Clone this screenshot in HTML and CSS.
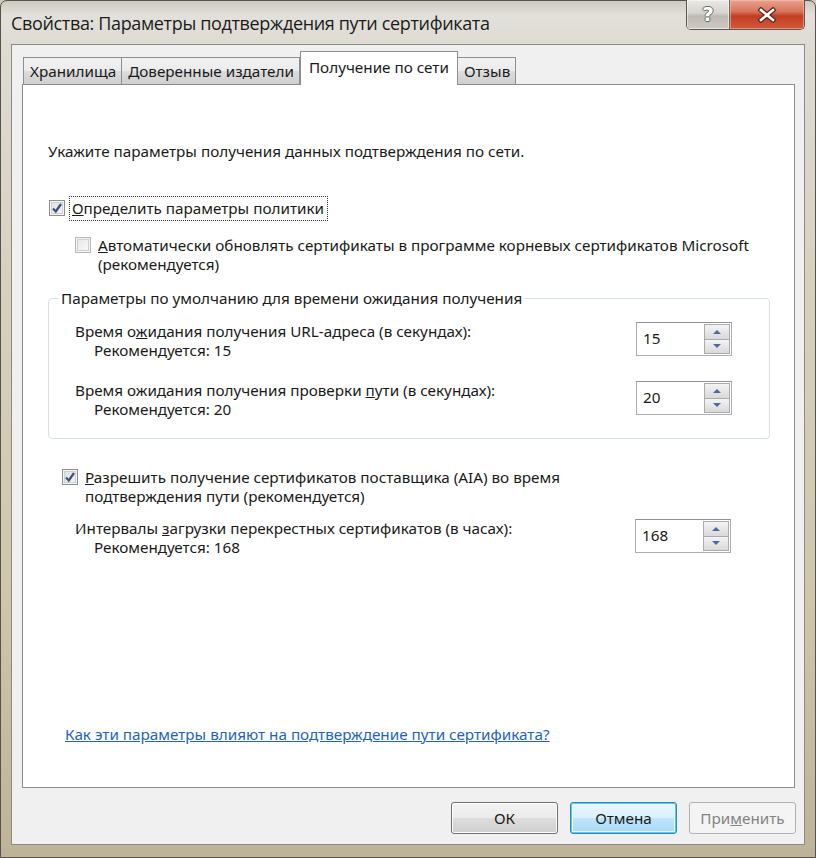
FILE: index.html
```html
<!DOCTYPE html>
<html lang="ru">
<head>
    <meta charset="utf-8">
    <title>Свойства: Параметры подтверждения пути сертификата</title>
    <link rel="stylesheet" href="styles.css">
</head>
<body>
<div class="window">
    <div class="titlebar">
        <div class="title">Свойства: Параметры подтверждения пути сертификата</div>
        <div class="caption-buttons">
            <div class="cap-btn help"><span>?</span></div>
            <div class="cap-btn close">
                <svg width="20" height="16" viewBox="0 0 20 16">
                    <path d="M4 3 L16 13 M16 3 L4 13" stroke="#5a2a20" stroke-width="5" stroke-linecap="square"/>
                    <path d="M4 3 L16 13 M16 3 L4 13" stroke="#fff" stroke-width="2.6" stroke-linecap="square"/>
                </svg>
            </div>
        </div>
    </div>

    <div class="client">
        <div class="tabs">
            <div class="tab">Хранилища</div>
            <div class="tab">Доверенные издатели</div>
            <div class="tab active">Получение по сети</div>
            <div class="tab">Отзыв</div>
        </div>

        <div class="panel">
            <p class="intro">Укажите параметры получения данных подтверждения по сети.</p>

            <div class="check-row policy">
                <span class="checkbox checked">
                    <svg width="12" height="12" viewBox="0 0 12 12"><path d="M2 6.5 L4.8 9.5 L10 2" fill="none" stroke="#3a4f86" stroke-width="2.2"/></svg>
                </span>
                <span class="check-label focused"><u>О</u>пределить параметры политики</span>
            </div>

            <div class="check-row auto-update">
                <span class="checkbox disabled"></span>
                <span class="check-label"><u>А</u>втоматически обновлять сертификаты в программе корневых сертификатов Microsoft<br>(рекомендуется)</span>
            </div>

            <fieldset class="group">
                <legend>Параметры по умолчанию для времени ожидания получения</legend>
                <div class="field-row">
                    <div class="field-text">
                        Время о<u>ж</u>идания получения URL-адреса (в секундах):
                        <div class="hint">Рекомендуется: 15</div>
                    </div>
                    <div class="spinner">
                        <div class="spin-value">15</div>
                        <div class="spin-btns">
                            <div class="spin-btn up"></div>
                            <div class="spin-btn down"></div>
                        </div>
                    </div>
                </div>
                <div class="field-row">
                    <div class="field-text">
                        Время ожидания получения проверки <u>п</u>ути (в секундах):
                        <div class="hint">Рекомендуется: 20</div>
                    </div>
                    <div class="spinner">
                        <div class="spin-value">20</div>
                        <div class="spin-btns">
                            <div class="spin-btn up"></div>
                            <div class="spin-btn down"></div>
                        </div>
                    </div>
                </div>
            </fieldset>

            <div class="check-row aia">
                <span class="checkbox checked">
                    <svg width="12" height="12" viewBox="0 0 12 12"><path d="M2 6.5 L4.8 9.5 L10 2" fill="none" stroke="#3a4f86" stroke-width="2.2"/></svg>
                </span>
                <span class="check-label"><u>Р</u>азрешить получение сертификатов поставщика (AIA) во время<br>подтверждения пути (рекомендуется)</span>
            </div>

            <div class="field-row cross">
                <div class="field-text">
                    Интервалы <u>з</u>агрузки перекрестных сертификатов (в часах):
                    <div class="hint">Рекомендуется: 168</div>
                </div>
                <div class="spinner">
                    <div class="spin-value">168</div>
                    <div class="spin-btns">
                        <div class="spin-btn up"></div>
                        <div class="spin-btn down"></div>
                    </div>
                </div>
            </div>

            <a class="help-link" href="#">Как эти параметры влияют на подтверждение пути сертификата?</a>
        </div>

        <div class="buttons">
            <button class="btn">ОК</button>
            <button class="btn default">Отмена</button>
            <button class="btn" disabled>При<u>м</u>енить</button>
        </div>
    </div>
</div>
</body>
</html>
```

FILE: styles.css
```css
* {
    box-sizing: border-box;
}
body {
    margin: 0;
    width: 816px;
    height: 858px;
    background: #cfc9b8;
    font-family: "Noto Sans", "Open Sans", sans-serif;
    font-size: 15.25px;
    line-height: 19px;
    color: #1a1a1a;
}
.window {
    width: 816px;
    height: 858px;
    padding: 0 10px 12px 10px;
    border: 1px solid #55534c;
    border-radius: 7px 7px 0 0;
    background: linear-gradient(180deg, #cdcac2 0, #e2e0da 14px, #dedbd3 45px, #d6d0bd 300px, #cfc6aa 600px, #bdb398 858px);
    display: flex;
    flex-direction: column;
}
.titlebar {
    height: 44px;
    display: flex;
    align-items: flex-start;
}
.title {
    padding-top: 10px;
    font-family: "Open Sans", sans-serif;
    font-size: 18px;
    line-height: 24px;
    letter-spacing: -0.35px;
    color: #1b1b1b;
}
.caption-buttons {
    margin-left: auto;
    margin-top: -1px;
    display: flex;
    height: 30px;
    border: 1px solid #5b5650;
    border-top: none;
    border-radius: 0 0 5px 5px;
    overflow: hidden;
}
.cap-btn {
    display: flex;
    align-items: center;
    justify-content: center;
    height: 100%;
}
.help {
    width: 43px;
    border-right: 1px solid #6c665e;
    background: linear-gradient(180deg, #e9e8e4 0, #d6d4cf 45%, #bebab2 55%, #cfcbc3 100%);
    box-shadow: inset 0 0 0 1px rgba(255, 255, 255, 0.5);
}
.help span {
    font-family: "DejaVu Sans", sans-serif;
    font-weight: bold;
    font-size: 20px;
    color: #fff;
    text-shadow: 1px 0 #6a6a6a, -1px 0 #6a6a6a, 0 1px #6a6a6a, 0 -1px #6a6a6a;
}
.close {
    width: 74px;
    background: linear-gradient(180deg, #e8a290 0, #d9735b 40%, #c23d22 55%, #d35a3c 100%);
    box-shadow: inset 0 0 0 1px rgba(255, 200, 180, 0.5);
}

.client {
    height: 801px;
    border: 1px solid #8d8a82;
    background: #f0f0f0;
    padding: 6px 0 10px 10px;
    display: flex;
    flex-direction: column;
}
.tabs {
    display: flex;
    align-items: flex-end;
    height: 33px;
    padding-left: 1px;
    position: relative;
    z-index: 1;
}
.tab {
    height: 27px;
    padding: 4px 5px 0 6px;
    border: 1px solid #8c8e94;
    border-bottom: none;
    border-left: none;
    background: linear-gradient(180deg, #f2f2f2 0, #ebebeb 50%, #dddddd 51%, #cfcfcf 100%);
    white-space: nowrap;
}
.tab:first-child {
    border-left: 1px solid #8c8e94;
}
.tab.active {
    height: 34px;
    margin-bottom: -1px;
    padding: 6px 8px 0 8px;
    background: #fff;
    border-left: 1px solid #8c8e94;
}
.tab.active + .tab {
    border-left: none;
}

.panel {
    height: 705px;
    width: 773px;
    border: 1px solid #898c95;
    background: #fff;
    padding: 57px 0 0 25px;
    display: flex;
    flex-direction: column;
    align-items: flex-start;
}
.intro {
    margin: 0;
}
.check-row {
    display: flex;
    align-items: flex-start;
}
.checkbox {
    flex: none;
    width: 16px;
    height: 16px;
    margin-top: 1px;
    margin-right: 7px;
    border: 1px solid #8e8f8f;
    background: linear-gradient(135deg, #dcdcdc 0, #f7f7f7 100%);
    box-shadow: inset 0 0 0 1px #f4f4f4, inset 0 0 0 2px #d0d0d0;
    display: flex;
    align-items: center;
    justify-content: center;
}
.checkbox.disabled {
    border-color: #b6b6b6;
    background: linear-gradient(135deg, #e6e6e6 0, #fafafa 100%);
}
.check-label.focused {
    outline: 1px dotted #333;
    outline-offset: 2px;
    padding-right: 1px;
}
.policy {
    margin-top: 38px;
    margin-left: 1px;
}
.auto-update {
    margin-top: 18px;
    margin-left: 27px;
}
.group {
    align-self: stretch;
    margin: 15px 24px 0 0;
    padding: 14px 37px 19px 11px;
    border: 1px solid #d5dfe5;
    border-radius: 4px;
    min-width: 0;
}
.group legend {
    padding: 0 2px;
    margin-left: -1px;
}
.field-row {
    display: flex;
    align-items: flex-start;
    margin-left: 15px;
}
.field-row + .field-row {
    margin-top: 21px;
}
.hint {
    padding-left: 19px;
}
.spinner {
    margin-left: auto;
    width: 96px;
    height: 34px;
    border: 1px solid #abadb3;
    border-top-color: #8e9197;
    display: flex;
    background: #fff;
}
.spin-value {
    flex: 1;
    padding: 6px 0 0 6px;
}
.spin-btns {
    width: 27px;
    display: flex;
    flex-direction: column;
    padding: 1px 1px 1px 0;
}
.spin-btn {
    flex: 1;
    border: 1px solid #a9abb0;
    background: linear-gradient(180deg, #f4f4f4 0, #e6e6e6 50%, #d9d9d9 100%);
    display: flex;
    align-items: center;
    justify-content: center;
}
.spin-btn.down {
    border-top: none;
}
.spin-btn::after {
    content: "";
    border-left: 4px solid transparent;
    border-right: 4px solid transparent;
}
.spin-btn.up::after {
    border-bottom: 4px solid #4d6aa0;
}
.spin-btn.down::after {
    border-top: 4px solid #4d6aa0;
}
.aia {
    margin-top: 29px;
    margin-left: 14px;
}
.field-row.cross {
    align-self: stretch;
    margin: 13px 63px 0 27px;
}
.help-link {
    margin-top: auto;
    margin-bottom: 43px;
    margin-left: 17px;
    color: #1f63c4;
    text-decoration: underline;
}

.buttons {
    display: flex;
    justify-content: flex-end;
    gap: 12px;
    margin-top: 14px;
    padding-right: 8px;
}
.btn {
    width: 107px;
    height: 32px;
    font-family: "Noto Sans", "Open Sans", sans-serif;
    font-size: 15.25px;
    color: #1a1a1a;
    border: 1px solid #707070;
    border-radius: 3px;
    background: linear-gradient(180deg, #f2f2f2 0, #ebebeb 50%, #dddddd 51%, #cfcfcf 100%);
    box-shadow: inset 0 0 0 1px #fcfcfc;
    padding: 0;
}
.btn.default {
    border-color: #3c7fb1;
    background: linear-gradient(180deg, #eaf6fd 0, #d9f0fc 50%, #bee6fd 51%, #a7d9f5 100%);
    box-shadow: inset 0 0 0 1px #48d2f4, inset 0 0 0 2px #e6f7fd;
}
.btn:disabled {
    border-color: #adb2b5;
    background: #f4f4f4;
    box-shadow: none;
    color: #838383;
}
```
